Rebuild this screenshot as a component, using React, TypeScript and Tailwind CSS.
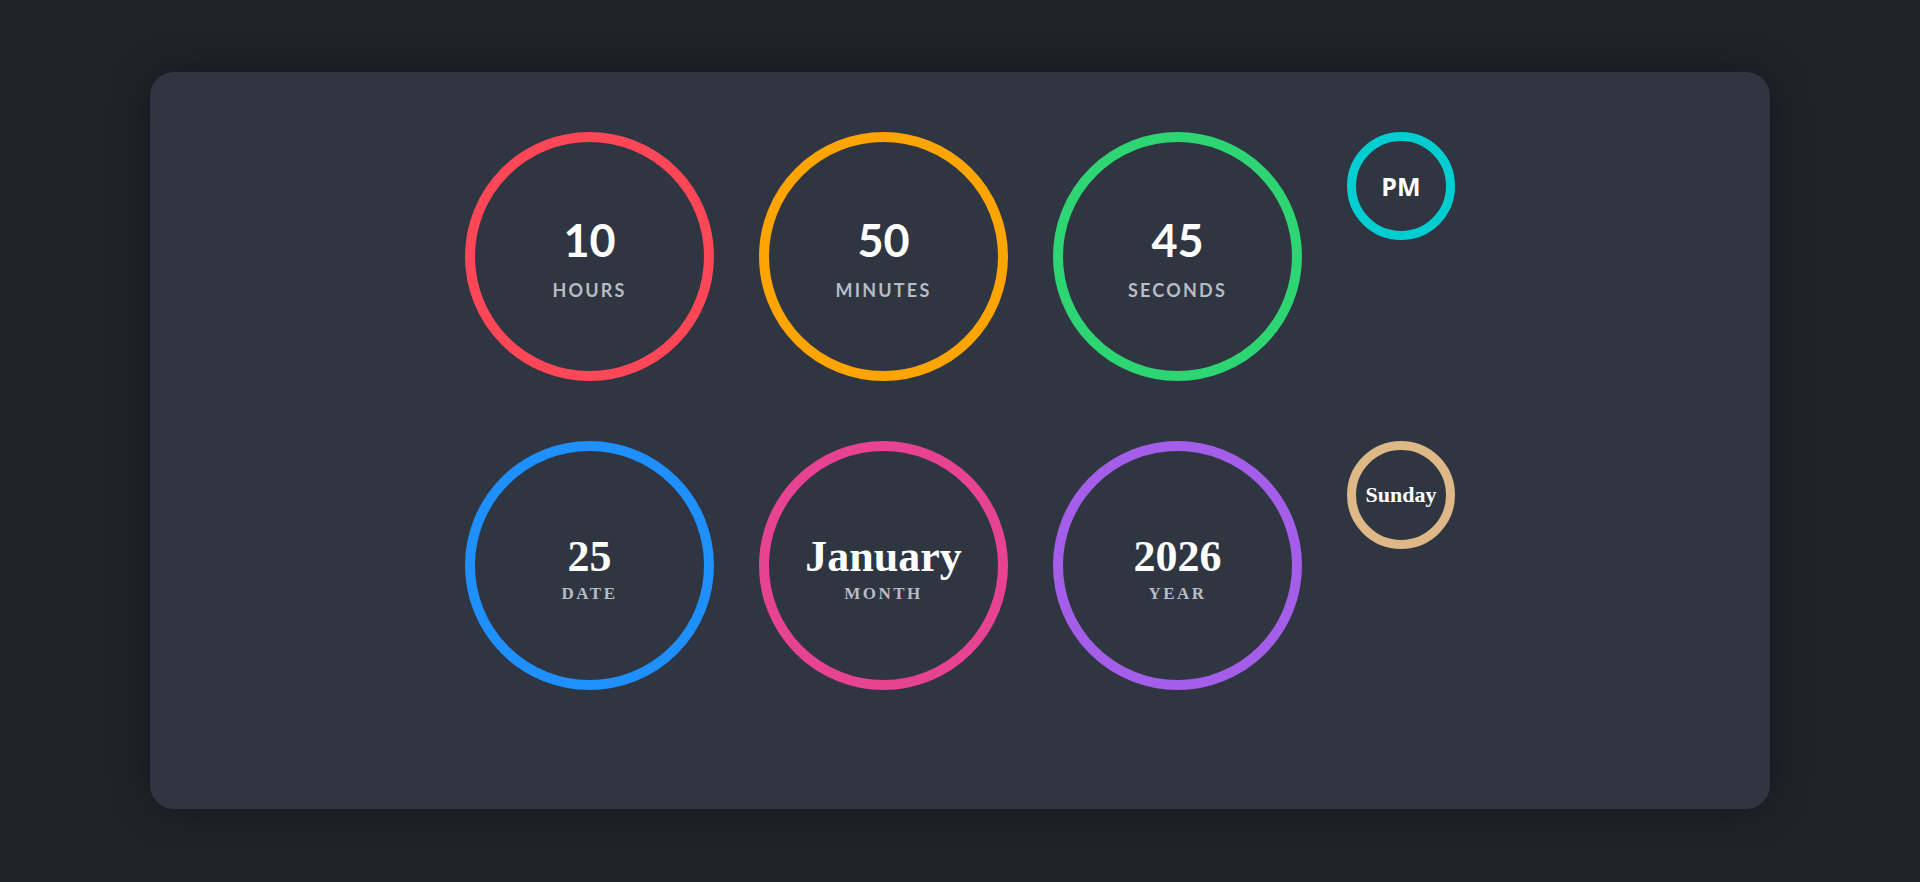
const timeItems = [
  { value: "10", label: "HOURS", ring: "border-[#ff4757]" },
  { value: "50", label: "MINUTES", ring: "border-[#ffa502]" },
  { value: "45", label: "SECONDS", ring: "border-[#2ed573]" },
];

const dateItems = [
  { value: "25", label: "DATE", ring: "border-[#1e90ff]" },
  { value: "January", label: "MONTH", ring: "border-[#e84393]" },
  { value: "2026", label: "YEAR", ring: "border-[#a55eea]" },
];

const sans = { fontFamily: "Lato, 'Open Sans', sans-serif" };
const serif = { fontFamily: "'Liberation Serif', 'DejaVu Serif', serif" };

function TimeRing({ value, label, ring }: { value: string; label: string; ring: string }) {
  return (
    <div
      className={`w-[249px] h-[249px] rounded-full border-[10px] ${ring} flex flex-col items-center justify-center`}
      style={sans}
    >
      <span className="text-white text-[45px] font-bold leading-none mt-[4px]">{value}</span>
      <span className="text-[#b8bcc4] text-[18px] font-bold tracking-[2.2px] mt-[18px] leading-none">
        {label}
      </span>
    </div>
  );
}

function DateRing({ value, label, ring }: { value: string; label: string; ring: string }) {
  return (
    <div
      className={`w-[249px] h-[249px] rounded-full border-[10px] ${ring} flex flex-col items-center justify-center`}
      style={serif}
    >
      <span className="text-white text-[44px] font-bold leading-none mt-[6px]">{value}</span>
      <span className="text-[#b8bcc4] text-[17px] font-bold tracking-[2.5px] mt-[6px] leading-none">
        {label}
      </span>
    </div>
  );
}

export default function App() {
  return (
    <div className="min-h-screen w-full bg-[#1f242a] pt-[72px]">
      <div className="mx-[150px] h-[737px] rounded-[24px] bg-[#2f3541] shadow-[0_0_40px_rgba(0,0,0,0.35)] pt-[60px] flex flex-col items-center gap-[60px]">
        {/* Time row */}
        <div className="flex items-start gap-[45px]">
          {timeItems.map((t) => (
            <TimeRing key={t.label} {...t} />
          ))}
          <div
            className="w-[108px] h-[108px] rounded-full border-[9px] border-[#00ced1] flex items-center justify-center"
            style={{ fontFamily: "'Open Sans', sans-serif" }}
          >
            <span className="text-white text-[25px] font-bold leading-none">PM</span>
          </div>
        </div>

        {/* Date row */}
        <div className="flex items-start gap-[45px]">
          {dateItems.map((d) => (
            <DateRing key={d.label} {...d} />
          ))}
          <div
            className="w-[108px] h-[108px] rounded-full border-[9px] border-[#deb887] flex items-center justify-center"
            style={serif}
          >
            <span className="text-white text-[22px] font-bold leading-none">Sunday</span>
          </div>
        </div>
      </div>
    </div>
  );
}
